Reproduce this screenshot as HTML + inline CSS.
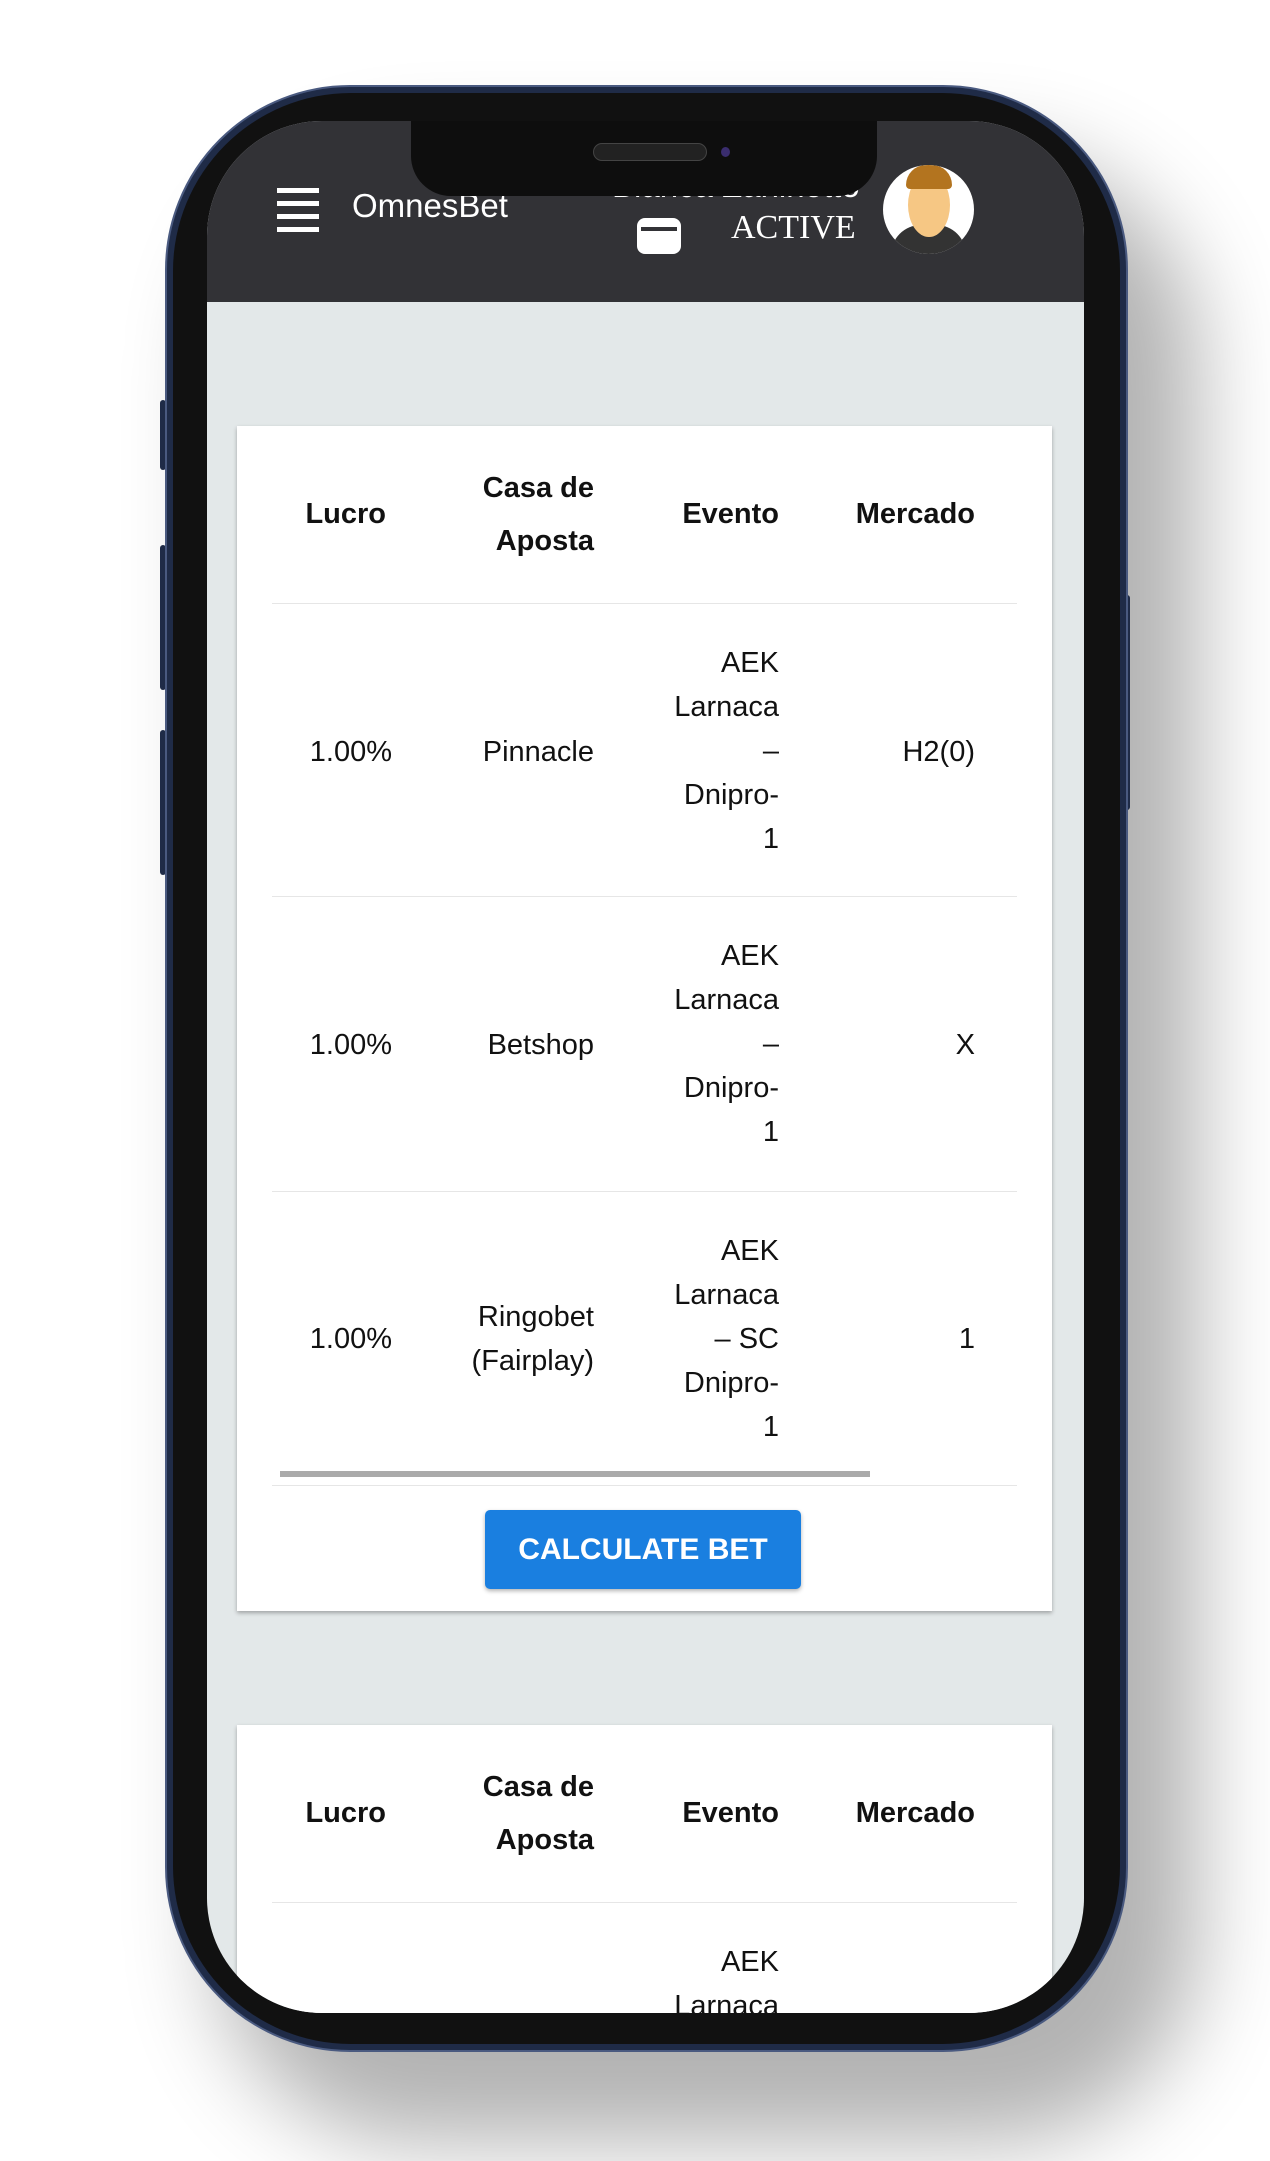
<!DOCTYPE html>
<html><head><meta charset="utf-8"><style>
*{margin:0;padding:0;box-sizing:border-box}
body{width:1270px;height:2161px;background:#fff;position:relative;overflow:hidden;font-family:"Liberation Sans",sans-serif}
.abs{position:absolute}
.shadow{left:175px;top:95px;width:943px;height:1947px;border-radius:185px;background:#bbb;box-shadow:60px 80px 90px 20px rgba(0,0,0,.3)}
.body{left:165px;top:85px;width:963px;height:1967px;border-radius:185px;background:#1f2b47;border:2px solid #4a5a80}
.bezel{left:173px;top:93px;width:947px;height:1951px;border-radius:178px;background:#111}
.screen{left:207px;top:121px;width:877px;height:1892px;border-radius:115px;overflow:hidden;background:#e3e8e9}
.hdr{left:0;top:0;width:877px;height:181px;background:#323236}
.notch{left:204px;top:0;width:466px;height:75px;background:#0e0e0e;border-radius:0 0 40px 40px}
.t{position:absolute;font-size:29px;line-height:44px;color:#111;text-align:right;width:300px}
.h{font-weight:bold}
.card{background:#fff;left:30px;width:815px;box-shadow:0 2px 4px rgba(0,0,0,.3)}
.line{position:absolute;left:35px;width:745px;height:1px;background:#e6e6e6}
.btn{left:278px;width:316px;height:79px;background:#1a7fe0;border-radius:5px;color:#fff;font-weight:bold;font-size:30px;line-height:79px;text-align:center;box-shadow:0 2px 4px rgba(0,0,0,.3)}
.side{background:#1f2b47;width:6px;border-radius:3px}
</style></head><body>
<div class="abs shadow"></div>
<div class="abs side" style="left:160px;top:400px;height:70px"></div>
<div class="abs side" style="left:160px;top:545px;height:145px"></div>
<div class="abs side" style="left:160px;top:730px;height:145px"></div>
<div class="abs side" style="left:1124px;top:595px;height:215px"></div>
<div class="abs body"></div>
<div class="abs bezel"></div>
<div class="abs screen">
  <div class="abs hdr">
    <div class="abs" style="left:70px;top:67px;width:42px;height:5px;background:#fff"></div>
    <div class="abs" style="left:70px;top:80px;width:42px;height:5px;background:#fff"></div>
    <div class="abs" style="left:70px;top:93px;width:42px;height:5px;background:#fff"></div>
    <div class="abs" style="left:70px;top:106px;width:42px;height:5px;background:#fff"></div>
    <div class="abs" style="left:145px;top:66px;font-size:33px;color:#fff">OmnesBet</div>
    <div class="abs" style="left:405px;top:48px;font-size:33px;line-height:33px;color:#fff;white-space:nowrap">Bianca Zaninotto</div>
    <div class="abs" style="left:430px;top:97px;width:44px;height:36px;background:#fff;border-radius:8px"></div>
    <div class="abs" style="left:434px;top:106px;width:36px;height:4px;background:#323236"></div>
    <div class="abs" style="left:524px;top:88px;font-family:'Liberation Serif',serif;font-size:34px;color:#fff">ACTIVE</div>
    <div class="abs" style="left:676px;top:44px;width:91px;height:89px;border-radius:50%;background:#fff;overflow:hidden">
      <div class="abs" style="left:8px;top:60px;width:75px;height:40px;border-radius:30px 30px 0 0;background:#333"></div>
      <div class="abs" style="left:25px;top:8px;width:42px;height:64px;border-radius:50%;background:#f6c784"></div>
      <div class="abs" style="left:23px;top:0px;width:46px;height:24px;border-radius:20px 20px 4px 4px;background:#b3741f"></div>
    </div>
  </div>
  <div class="abs notch">
    <div class="abs" style="left:182px;top:22px;width:114px;height:18px;border-radius:9px;background:#222;border:1px solid #444"></div>
    <div class="abs" style="left:310px;top:26px;width:9px;height:10px;border-radius:50%;background:#3a2d6e"></div>
  </div>

  <div class="abs card" style="top:305px;height:1185px">
    <div class="t h" style="left:-151px;top:66px">Lucro</div>
    <div class="t h" style="left:57px;top:40px">Casa de</div>
    <div class="t h" style="left:57px;top:93px">Aposta</div>
    <div class="t h" style="left:242px;top:66px">Evento</div>
    <div class="t h" style="left:438px;top:66px">Mercado</div>
    <div class="line" style="top:177px"></div>

    <div class="t" style="left:-145px;top:304px">1.00%</div>
    <div class="t" style="left:57px;top:304px">Pinnacle</div>
    <div class="t" style="left:242px;top:215px">AEK<br>Larnaca<br>–<br>Dnipro-<br>1</div>
    <div class="t" style="left:438px;top:304px">H2(0)</div>
    <div class="line" style="top:470px"></div>

    <div class="t" style="left:-145px;top:597px">1.00%</div>
    <div class="t" style="left:57px;top:597px">Betshop</div>
    <div class="t" style="left:242px;top:508px">AEK<br>Larnaca<br>–<br>Dnipro-<br>1</div>
    <div class="t" style="left:438px;top:597px">X</div>
    <div class="line" style="top:765px"></div>

    <div class="t" style="left:-145px;top:891px">1.00%</div>
    <div class="t" style="left:57px;top:869px">Ringobet<br>(Fairplay)</div>
    <div class="t" style="left:242px;top:803px">AEK<br>Larnaca<br>– SC<br>Dnipro-<br>1</div>
    <div class="t" style="left:438px;top:891px">1</div>
    <div class="abs" style="left:43px;top:1045px;width:590px;height:6px;background:#aaa"></div>
    <div class="line" style="top:1059px"></div>
  </div>
  <div class="abs btn" style="top:1389px">CALCULATE BET</div>

  <div class="abs card" style="top:1604px;height:400px">
    <div class="t h" style="left:-151px;top:66px">Lucro</div>
    <div class="t h" style="left:57px;top:40px">Casa de</div>
    <div class="t h" style="left:57px;top:93px">Aposta</div>
    <div class="t h" style="left:242px;top:66px">Evento</div>
    <div class="t h" style="left:438px;top:66px">Mercado</div>
    <div class="line" style="top:177px"></div>
    <div class="t" style="left:242px;top:215px">AEK<br>Larnaca</div>
  </div>
</div>
</body></html>
